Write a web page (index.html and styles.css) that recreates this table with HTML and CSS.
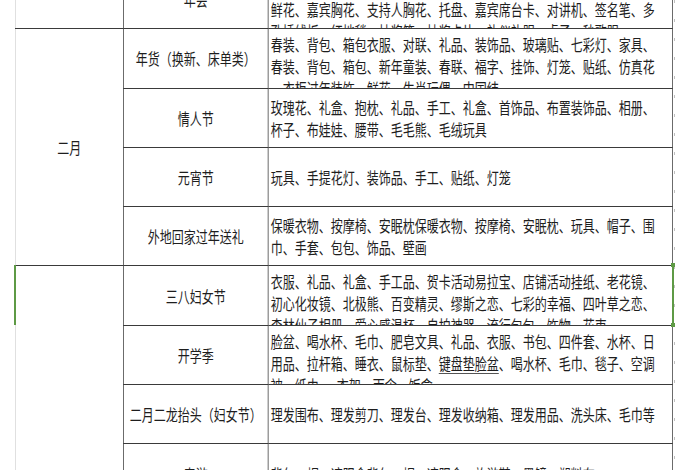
FILE: index.html
```html
<!DOCTYPE html>
<html lang="zh-CN">
<head>
<meta charset="utf-8">
<title>节日商品表</title>
<link rel="stylesheet" href="styles.css">
</head>
<body>
<div class="sheet">
  <div class="frame">
    <div class="scaler">
      <table class="grid">
        <colgroup><col class="c1"><col class="c2"><col class="c3"></colgroup>
        <tr>
          <td class="month"><div class="box one"></div></td>
          <td class="label"><div class="box">年会</div></td>
          <td class="items"><div class="box top first">
            <span>背景板、签到台、签到本、签字笔、胸花、礼品、奖品、奖杯、证书、</span>
            <span>鲜花、嘉宾胸花、支持人胸花、托盘、嘉宾席台卡、对讲机、签名笔、多</span>
            <span>孔插线板、红地毯、抽奖箱、抽奖卡片、礼仪礼服、桌子、秒歌服</span>
          </div></td>
        </tr>
        <tr>
          <td class="month" rowspan="4"><div class="box four">二月</div></td>
          <td class="label"><div class="box">年货（换新、床单类）</div></td>
          <td class="items"><div class="box top">
            <span>春装、背包、箱包衣服、对联、礼品、装饰品、玻璃贴、七彩灯、家具、</span>
            <span>春装、背包、箱包、新年童装、春联、福字、挂饰、灯笼、贴纸、仿真花</span>
            <span>、衣柜过年装饰、鲜花、生肖玩偶、中国结</span>
          </div></td>
        </tr>
        <tr>
          <td class="label"><div class="box">情人节</div></td>
          <td class="items"><div class="box">
            <span>玫瑰花、礼盒、抱枕、礼品、手工、礼盒、首饰品、布置装饰品、相册、</span>
            <span>杯子、布娃娃、腰带、毛毛熊、毛绒玩具</span>
          </div></td>
        </tr>
        <tr>
          <td class="label"><div class="box">元宵节</div></td>
          <td class="items"><div class="box">
            <span>玩具、手提花灯、装饰品、手工、贴纸、灯笼</span>
          </div></td>
        </tr>
        <tr>
          <td class="label"><div class="box">外地回家过年送礼</div></td>
          <td class="items"><div class="box">
            <span>保暖衣物、按摩椅、安眠枕保暖衣物、按摩椅、安眠枕、玩具、帽子、围</span>
            <span>巾、手套、包包、饰品、壁画</span>
          </div></td>
        </tr>
        <tr>
          <td class="month" rowspan="4"><div class="box four"></div></td>
          <td class="label"><div class="box">三八妇女节</div></td>
          <td class="items"><div class="box top">
            <span>衣服、礼品、礼盒、手工品、贺卡活动易拉宝、店铺活动挂纸、老花镜、</span>
            <span>初心化妆镜、北极熊、百变精灵、缪斯之恋、七彩的幸福、四叶草之恋、</span>
            <span>森林仙子相册、爱心感温杯、自拍神器、流行包包、饰物、花束</span>
          </div></td>
        </tr>
        <tr>
          <td class="label"><div class="box">开学季</div></td>
          <td class="items"><div class="box top">
            <span>脸盆、喝水杯、毛巾、肥皂文具、礼品、衣服、书包、四件套、水杯、日</span>
            <span>用品、拉杆箱、睡衣、鼠标垫、<u class="mark">键盘垫脸盆</u>、喝水杯、毛巾、毯子、空调</span>
            <span>被、纸巾、、衣架、雨伞、饭盒</span>
          </div></td>
        </tr>
        <tr>
          <td class="label"><div class="box">二月二龙抬头（妇女节）</div></td>
          <td class="items"><div class="box">
            <span>理发围布、理发剪刀、理发台、理发收纳箱、理发用品、洗头床、毛巾等</span>
          </div></td>
        </tr>
        <tr>
          <td class="label"><div class="box">春游</div></td>
          <td class="items"><div class="box">
            <span>背包、帽、遮阳伞背包、帽、遮阳伞、旅游鞋、墨镜、塑料布</span>
          </div></td>
        </tr>
      </table>
    </div>
  </div>
  <div class="pagebreak"></div>
  <div class="selection"></div>
</div>
</body>
</html>
```

FILE: styles.css
```css
html, body {
  margin: 0;
  padding: 0;
  background: #ffffff;
}

.sheet {
  position: relative;
  display: flex;
  align-items: stretch;
  height: 470px;
  width: 700px;
  overflow: hidden;
  padding-left: 15px;
  box-sizing: border-box;
  background: #ffffff;
}

.frame {
  flex: none;
  width: 657px;
}

.scaler {
  width: 876px;
  transform: scaleX(0.75);
  transform-origin: 0 0;
  margin-top: -31px;
}

.grid {
  width: 876px;
  table-layout: fixed;
  border-collapse: collapse;
  font-family: "Noto Sans CJK SC", "Noto Sans", sans-serif;
  font-size: 16px;
  line-height: 22px;
  color: #1e1e1e;
}

.c1 { width: 144px; }
.c2 { width: 193px; }
.c3 { width: 539px; }

.grid td {
  padding: 0;
  border-top: 1px solid #3a3a3a;
  border-bottom: 1px solid #3a3a3a;
  border-left: 1.5px solid #3a3a3a;
  border-right: 1.5px solid #3a3a3a;
  vertical-align: top;
}

.grid td.month {
  border-left: 1.5px solid #d6d6d6;
}

.box {
  box-sizing: border-box;
  height: 58.3px;
  overflow: hidden;
  display: flex;
  align-items: center;
  justify-content: center;
  white-space: nowrap;
}

.box.four {
  height: 236.2px;
}

.items .box {
  flex-direction: column;
  align-items: flex-start;
  justify-content: center;
  padding: 0 3px;
}

.items .box.top {
  justify-content: flex-start;
  padding-top: 4px;
}

.items .box.first {
  padding-top: 6px;
}

.items span {
  display: block;
  flex: none;
}

.mark {
  text-decoration: underline;
  text-decoration-color: #555555;
  text-underline-offset: 3px;
}

.pagebreak {
  flex: none;
  width: 1px;
  margin-left: 2px;
  background: repeating-linear-gradient(to bottom, #b0b0b0 0 3px, transparent 3px 19px);
  opacity: 0.8;
}

.selection {
  position: absolute;
  left: 14px;
  top: 265px;
  width: 656px;
  height: 60px;
  border-left: 2px solid #5e9a45;
  border-right: 2px solid #5e9a45;
}

.selection::before,
.selection::after {
  content: "";
  position: absolute;
  right: -3px;
  width: 4px;
  height: 4px;
  background: #5e9a45;
}

.selection::before { top: -2px; }
.selection::after { bottom: -2px; }
```
